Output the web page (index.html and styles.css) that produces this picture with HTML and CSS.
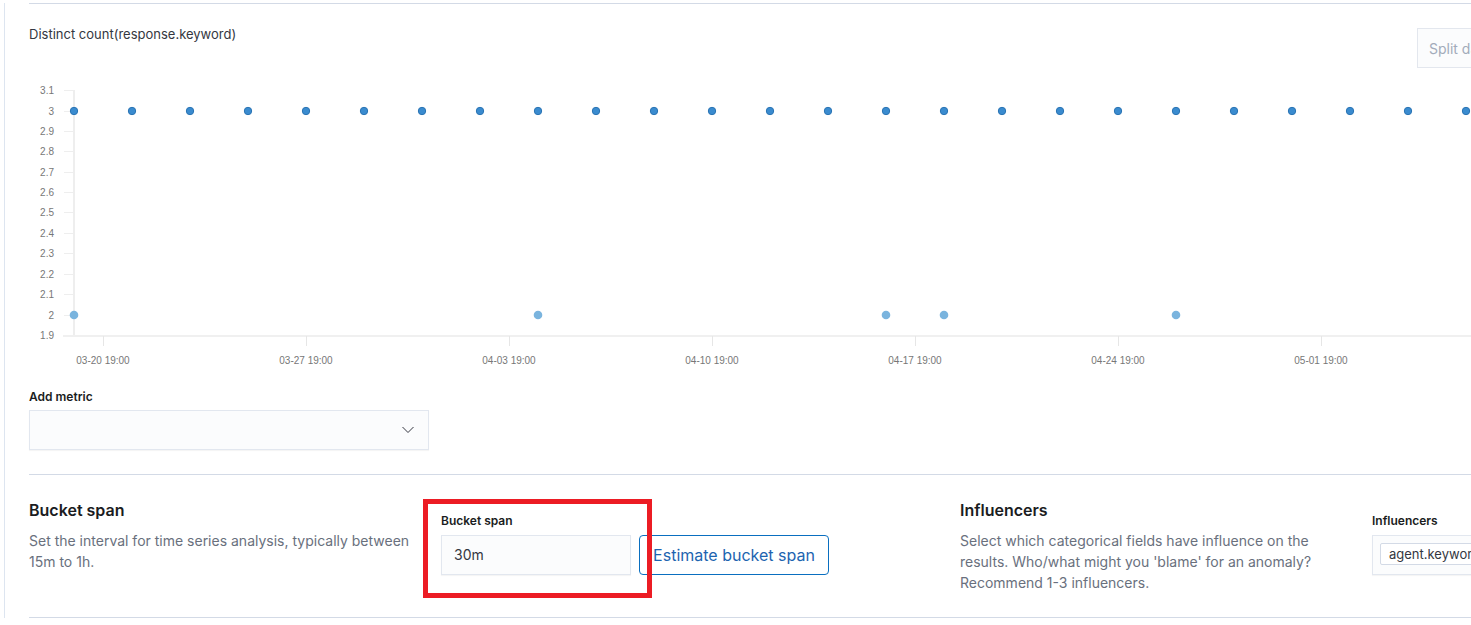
FILE: index.html
```html
<!DOCTYPE html>
<html>
<head>
<meta charset="utf-8">
<link rel="stylesheet" href="styles.css">
</head>
<body>
<div class="page">
  <div class="panel">
    <div class="chart-block">
      <div class="chart-header">
        <div class="chart-title">Distinct count(response.keyword)</div>
        <button class="split-btn">Split data</button>
      </div>
      <svg class="chart" width="1442" height="300" viewBox="29 80 1442 300">
        <g class="ylabels" font-family="Liberation Sans, Arial, sans-serif" font-size="10" fill="#777" text-anchor="end">
          <text x="54" y="93.5">3.1</text>
          <text x="54" y="114.5">3</text>
          <text x="54" y="134.5">2.9</text>
          <text x="54" y="154.5">2.8</text>
          <text x="54" y="175.5">2.7</text>
          <text x="54" y="195.5">2.6</text>
          <text x="54" y="215.5">2.5</text>
          <text x="54" y="236.5">2.4</text>
          <text x="54" y="256.5">2.3</text>
          <text x="54" y="277.5">2.2</text>
          <text x="54" y="297.5">2.1</text>
          <text x="54" y="318.5">2</text>
          <text x="54" y="338.5">1.9</text>
        </g>
        <g stroke="#eeeeee" stroke-width="1">
          <line x1="64" y1="90.5" x2="74" y2="90.5"/>
          <line x1="64" y1="111.5" x2="74" y2="111.5"/>
          <line x1="64" y1="131.5" x2="74" y2="131.5"/>
          <line x1="64" y1="151.5" x2="74" y2="151.5"/>
          <line x1="64" y1="172.5" x2="74" y2="172.5"/>
          <line x1="64" y1="192.5" x2="74" y2="192.5"/>
          <line x1="64" y1="212.5" x2="74" y2="212.5"/>
          <line x1="64" y1="233.5" x2="74" y2="233.5"/>
          <line x1="64" y1="253.5" x2="74" y2="253.5"/>
          <line x1="64" y1="274.5" x2="74" y2="274.5"/>
          <line x1="64" y1="294.5" x2="74" y2="294.5"/>
          <line x1="64" y1="315.5" x2="74" y2="315.5"/>
        </g>
        <line x1="74" y1="90" x2="74" y2="336" stroke="#eeeeee" stroke-width="2"/>
        <line x1="63" y1="336" x2="1471" y2="336" stroke="#f0f0f0" stroke-width="2"/>
        <g stroke="#e6e6e6" stroke-width="1">
          <line x1="103.5" y1="336" x2="103.5" y2="346"/>
          <line x1="306.5" y1="336" x2="306.5" y2="346"/>
          <line x1="509.5" y1="336" x2="509.5" y2="346"/>
          <line x1="712.5" y1="336" x2="712.5" y2="346"/>
          <line x1="915.5" y1="336" x2="915.5" y2="346"/>
          <line x1="1118.5" y1="336" x2="1118.5" y2="346"/>
          <line x1="1321.5" y1="336" x2="1321.5" y2="346"/>
        </g>
        <g font-family="Liberation Sans, Arial, sans-serif" font-size="10" fill="#777" text-anchor="middle">
          <text x="103" y="364">03-20 19:00</text>
          <text x="306" y="364">03-27 19:00</text>
          <text x="509" y="364">04-03 19:00</text>
          <text x="712" y="364">04-10 19:00</text>
          <text x="915" y="364">04-17 19:00</text>
          <text x="1118" y="364">04-24 19:00</text>
          <text x="1321" y="364">05-01 19:00</text>
        </g>
        <g fill="#7ab4de">
          <circle cx="74" cy="315" r="4.3"/>
          <circle cx="538" cy="315" r="4.3"/>
          <circle cx="886" cy="315" r="4.3"/>
          <circle cx="944" cy="315" r="4.3"/>
          <circle cx="1176" cy="315" r="4.3"/>
        </g>
        <g fill="#3a8bcf" stroke="#2a74b4" stroke-width="1">
          <circle cx="74" cy="111" r="3.7"/>
          <circle cx="132" cy="111" r="3.7"/>
          <circle cx="190" cy="111" r="3.7"/>
          <circle cx="248" cy="111" r="3.7"/>
          <circle cx="306" cy="111" r="3.7"/>
          <circle cx="364" cy="111" r="3.7"/>
          <circle cx="422" cy="111" r="3.7"/>
          <circle cx="480" cy="111" r="3.7"/>
          <circle cx="538" cy="111" r="3.7"/>
          <circle cx="596" cy="111" r="3.7"/>
          <circle cx="654" cy="111" r="3.7"/>
          <circle cx="712" cy="111" r="3.7"/>
          <circle cx="770" cy="111" r="3.7"/>
          <circle cx="828" cy="111" r="3.7"/>
          <circle cx="886" cy="111" r="3.7"/>
          <circle cx="944" cy="111" r="3.7"/>
          <circle cx="1002" cy="111" r="3.7"/>
          <circle cx="1060" cy="111" r="3.7"/>
          <circle cx="1118" cy="111" r="3.7"/>
          <circle cx="1176" cy="111" r="3.7"/>
          <circle cx="1234" cy="111" r="3.7"/>
          <circle cx="1292" cy="111" r="3.7"/>
          <circle cx="1350" cy="111" r="3.7"/>
          <circle cx="1408" cy="111" r="3.7"/>
          <circle cx="1466" cy="111" r="3.7"/>
        </g>
      </svg>
      <div class="field-label add-label">Add metric</div>
      <div class="select-box">
        <svg class="chevron" width="12" height="8" viewBox="0 0 12 8"><path d="M0.5 1 L6 6.5 L11.5 1" fill="none" stroke="#343741" stroke-width="1"/></svg>
      </div>
    </div>
    <div class="settings">
      <div class="group">
        <div class="desc">
          <h3 class="desc-title">Bucket span</h3>
          <p class="desc-text">Set the interval for time series analysis, typically between 15m to 1h.</p>
        </div>
        <div class="field">
          <div class="field-label">Bucket span</div>
          <div class="field-row">
            <div class="text-input">30m</div>
            <button class="estimate-btn">Estimate bucket span</button>
          </div>
          <div class="highlight"></div>
        </div>
      </div>
      <div class="group">
        <div class="desc">
          <h3 class="desc-title">Influencers</h3>
          <p class="desc-text">Select which categorical fields have influence on the results. Who/what might you 'blame' for an anomaly? Recommend 1-3 influencers.</p>
        </div>
        <div class="field">
          <div class="field-label">Influencers</div>
          <div class="combo">
            <span class="pill">agent.keyword</span>
          </div>
        </div>
      </div>
    </div>
  </div>
</div>
</body>
</html>
```

FILE: styles.css
```css
html, body {
  margin: 0;
  padding: 0;
  background: #ffffff;
  overflow: hidden;
}
body {
  font-family: Inter, "Noto Sans", sans-serif;
  color: #343741;
  width: 1471px;
  height: 625px;
}
.page {
  padding-left: 4px;
}
.panel {
  border-left: 1px solid #dde5f0;
  padding-left: 24px;
  width: 1500px;
}
.chart-block {
  margin-top: 3px;
  border-top: 1px solid #d3dae6;
  border-bottom: 1px solid #d3dae6;
  padding-bottom: 24px;
}
.chart-header {
  display: flex;
  align-items: flex-start;
  padding-top: 20px;
  height: 44px;
}
.chart-title {
  font-size: 13px;
  line-height: 20px;
  color: #343741;
}
.split-btn {
  margin-left: auto;
  margin-right: 12px;
  margin-top: 4px;
  width: 100px;
  height: 40px;
  background: #fbfcfd;
  border: 1px solid #e3e7ee;
  border-radius: 0;
  color: #a2abba;
  font-family: Inter, "Noto Sans", sans-serif;
  font-size: 14px;
  text-align: left;
  padding: 0 11px;
}
.chart {
  display: block;
  margin-top: 12px;
}
.field-label {
  font-size: 12px;
  font-weight: 600;
  line-height: 16px;
  color: #1a1c21;
}
.add-label {
  margin-top: 9px;
  margin-bottom: 5px;
}
.select-box {
  width: 400px;
  height: 40px;
  box-sizing: border-box;
  background: #fbfcfd;
  border: 1px solid #e2e7ef;
  box-shadow: 0 1px 1px rgba(0, 0, 0, 0.04);
  display: flex;
  align-items: center;
  justify-content: flex-end;
  padding-right: 14px;
}
.chevron {
  display: block;
}
.settings {
  display: flex;
  gap: 24px;
  padding-top: 23px;
  padding-bottom: 24px;
  border-bottom: 1px solid #d3dae6;
}
.group {
  display: flex;
  gap: 24px;
  width: 907px;
  flex: none;
}
.desc {
  width: 388px;
  flex: none;
}
.desc-title {
  margin: 0;
  font-size: 16px;
  font-weight: 600;
  line-height: 24px;
  color: #1a1c21;
}
.desc-text {
  margin: 8px 0 0;
  font-size: 14px;
  line-height: 21px;
  color: #69707d;
}
.field {
  position: relative;
  padding-top: 15px;
}
.field .field-label {
  margin-bottom: 6px;
}
.field-row {
  display: flex;
  gap: 8px;
}
.text-input {
  width: 190px;
  height: 40px;
  box-sizing: border-box;
  background: #fbfcfd;
  border: 1px solid #e2e7ef;
  box-shadow: 0 1px 1px rgba(0, 0, 0, 0.04);
  font-size: 14px;
  line-height: 38px;
  padding-left: 12px;
  color: #343741;
}
.estimate-btn {
  width: 190px;
  height: 40px;
  box-sizing: border-box;
  background: #ffffff;
  border: 1px solid #0a6fc0;
  border-radius: 4px;
  color: #1d64b0;
  font-family: Inter, "Noto Sans", sans-serif;
  font-size: 16px;
  padding: 0;
}
.highlight {
  position: absolute;
  left: -18px;
  top: 1px;
  width: 229px;
  height: 99px;
  box-sizing: border-box;
  border: 5px solid #ec1c24;
}
.combo {
  width: 400px;
  height: 40px;
  box-sizing: border-box;
  background: #fbfcfd;
  border: 1px solid #e2e7ef;
  box-shadow: 0 1px 1px rgba(0, 0, 0, 0.04);
  padding: 7px 7px;
}
.pill {
  display: inline-block;
  height: 22px;
  box-sizing: border-box;
  line-height: 20px;
  padding: 0 8px;
  background: #ffffff;
  border: 1px solid #d3dae6;
  border-radius: 2px;
  font-size: 13px;
  color: #343741;
}
```
